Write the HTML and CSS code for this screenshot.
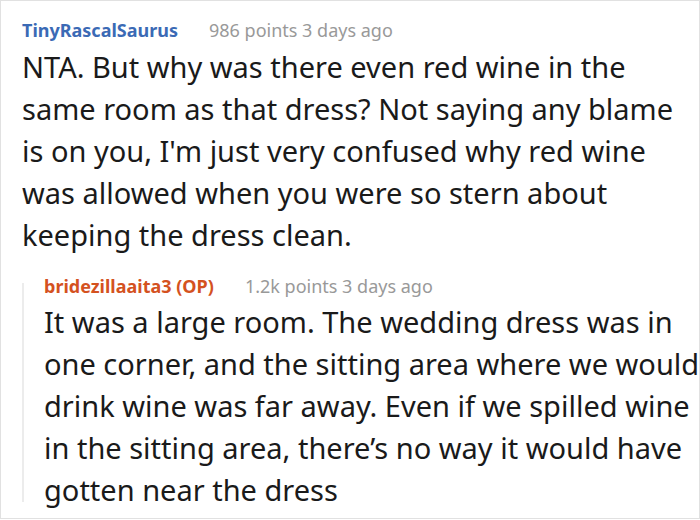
FILE: index.html
```html
<!DOCTYPE html>
<html>
<head>
<meta charset="utf-8">
<link rel="stylesheet" href="styles.css">
</head>
<body>
<div class="frame">
  <div class="comment">
    <div class="meta-row">
      <span class="user">TinyRascalSaurus</span>
      <span class="meta">986 points 3 days ago</span>
    </div>
    <p class="body">NTA. But why was there even red wine in the same room as that dress? Not saying any blame is on you, I'm just very confused why red wine was allowed when you were so stern about keeping the dress clean.</p>
    <div class="reply">
      <div class="meta-row">
        <span class="user op">bridezillaaita3 (OP)</span>
        <span class="meta">1.2k points 3 days ago</span>
      </div>
      <p class="body">It was a large room. The wedding dress was in one corner, and the sitting area where we would drink wine was far away. Even if we spilled wine in the sitting area, there’s no way it would have gotten near the dress</p>
    </div>
  </div>
</div>
</body>
</html>
```

FILE: styles.css
```css
html, body {
  margin: 0;
  padding: 0;
  background: #ffffff;
}
.frame {
  box-sizing: border-box;
  width: 700px;
  height: 519px;
  border: 1px solid #e1e1e1;
  overflow: hidden;
  font-family: "Noto Sans", "Open Sans", sans-serif;
}
.comment {
  padding: 17px 1px 0 21px;
}
.meta-row {
  display: flex;
  align-items: baseline;
  gap: 31px;
  height: 24px;
  line-height: 24px;
  font-size: 18px;
}
.user {
  font-weight: 700;
  color: #3b6ab5;
}
.user.op {
  color: #d4521f;
}
.meta {
  color: #999999;
}
.body {
  margin: 4px 0 0 0;
  font-size: 29px;
  line-height: 42px;
  color: #1a1a1a;
}
.reply {
  margin-top: 18px;
  padding-left: 22px;
  position: relative;
}
.reply .body {
  margin-top: 3px;
  margin-right: -10px;
}
.reply::before {
  content: "";
  position: absolute;
  left: 0;
  top: 9px;
  width: 2px;
  height: 219px;
  background: #ececec;
}
```
